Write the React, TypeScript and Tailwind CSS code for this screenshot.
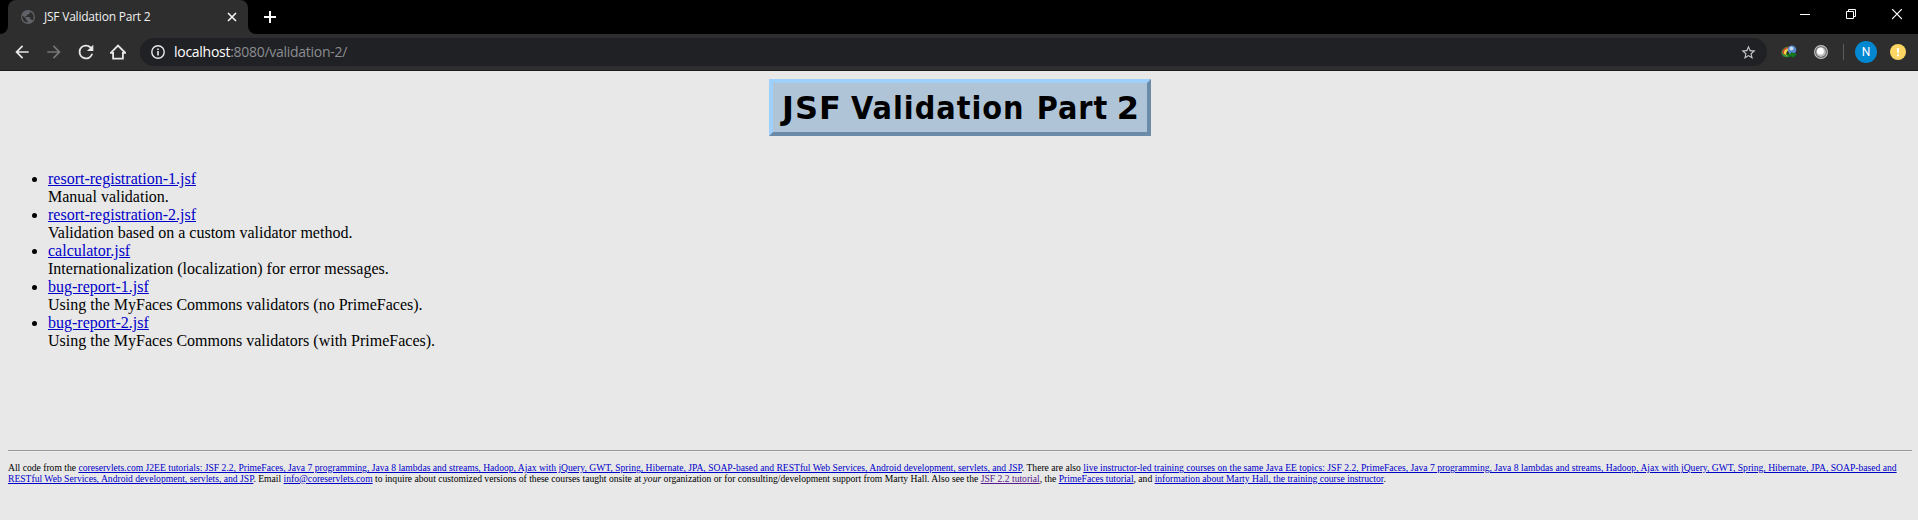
import React from "react";

const linkClass = "text-[#0000c8] underline";

const examples = [
  { name: "resort-registration-1.jsf", text: "Manual validation." },
  { name: "resort-registration-2.jsf", text: "Validation based on a custom validator method." },
  { name: "calculator.jsf", text: "Internationalization (localization) for error messages." },
  { name: "bug-report-1.jsf", text: "Using the MyFaces Commons validators (no PrimeFaces)." },
  { name: "bug-report-2.jsf", text: "Using the MyFaces Commons validators (with PrimeFaces)." },
];

function Link({ children, visited = false }: { children: React.ReactNode; visited?: boolean }) {
  return (
    <a href="#" className={visited ? "text-[#551a8b] underline" : linkClass}>
      {children}
    </a>
  );
}

function MaterialIcon({ d, className }: { d: string; className: string }) {
  return (
    <svg viewBox="0 0 24 24" fill="currentColor" className={className}>
      <path d={d} />
    </svg>
  );
}

function TabStrip() {
  return (
    <div className="flex h-[34px] bg-black">
      <div className="flex w-2 flex-col justify-end">
        <svg viewBox="0 0 8 8" className="size-2">
          <path d="M8 0V8H0A8 8 0 0 0 8 0Z" fill="#2e2e2e" />
        </svg>
      </div>
      <div className="flex h-full w-[240px] items-center rounded-t-lg bg-[#2e2e2e] pl-[13px] pr-[11px]">
        <svg viewBox="0 0 14 14" className="size-[14px] shrink-0">
          <circle cx="7" cy="7" r="7" fill="#5f6368" />
          <path d="M1.4 5.6L5 8.4V9.8L6.6 11V12.6A5.6 5.6 0 0 1 1.4 5.6Z" fill="#2e2e2e" />
          <path d="M8.8 1.7V3.4L7.6 4.6H6V6H4.4V7H8.6L9.4 8.2V9.6H10.6L11.6 10.4A5.7 5.7 0 0 0 8.8 1.7Z" fill="#2e2e2e" />
        </svg>
        <span className="ml-[9px] flex-1 whitespace-nowrap font-['Open_Sans',sans-serif] text-[12px] leading-[16px] tracking-[-0.22px] text-[#f1f1f1]">
          JSF Validation Part 2
        </span>
        <svg viewBox="0 0 10 10" className="size-[10px]" stroke="#f1f1f1" strokeWidth="1.7">
          <path d="M1 1L9 9M9 1L1 9" />
        </svg>
      </div>
      <div className="flex w-2 flex-col justify-end">
        <svg viewBox="0 0 8 8" className="size-2">
          <path d="M0 0V8H8A8 8 0 0 1 0 0Z" fill="#2e2e2e" />
        </svg>
      </div>
      <svg viewBox="0 0 12 12" className="ml-2 mt-[11px] size-3" stroke="#fff" strokeWidth="2">
        <path d="M6 0V12M0 6H12" />
      </svg>
      <div className="ml-auto mr-4 mt-[9px] flex h-[11px] gap-9">
        <svg viewBox="0 0 10 11" className="h-[11px] w-[10px]" shapeRendering="crispEdges">
          <path d="M0 5H10V6H0Z" fill="#fff" />
        </svg>
        <svg viewBox="0 0 10 11" className="h-[11px] w-[10px]" fill="none" stroke="#fff">
          <path d="M.5 2.5H7.5V9.5H.5ZM2.5 2.5V.5H9.5V7.5H7.5" />
        </svg>
        <svg viewBox="0 0 10 11" className="h-[11px] w-[10px]" stroke="#fff" strokeWidth="1.2">
          <path d="M0 0L10 10M10 0L0 10" />
        </svg>
      </div>
    </div>
  );
}

function Toolbar() {
  return (
    <div className="flex h-[37px] items-center border-b border-[#1c1c1c] bg-[#2e2e2e] pl-[12px] text-[#e8e8e8]">
      <MaterialIcon className="size-5" d="M20 11H7.83l5.59-5.59L12 4l-8 8 8 8 1.41-1.41L7.83 13H20v-2z" />
      <MaterialIcon className="ml-3 size-5 text-[#767676]" d="M12 4l-1.41 1.41L16.17 11H4v2h12.17l-5.58 5.59L12 20l8-8z" />
      <MaterialIcon
        className="ml-[11px] size-[22px]"
        d="M17.65 6.35A7.96 7.96 0 0 0 12 4a8 8 0 1 0 7.73 10h-2.08A6 6 0 1 1 12 6c1.66 0 3.14.69 4.22 1.78L13 11h7V4l-2.35 2.35z"
      />
      <svg viewBox="0 0 16 16" className="ml-[13px] size-4" fill="none" stroke="currentColor" strokeWidth="1.8">
        <path d="M.8 8.8L8 1.5L15.2 8.8H12.9V14.7H3.1V8.8Z" />
      </svg>
      <div className="ml-[14px] flex h-[28px] w-[1627px] items-center rounded-full bg-[#202124] pl-[11px] pr-[10px]">
        <svg viewBox="0 0 14 14" className="size-[14px]" fill="none" stroke="#e8eaed" strokeWidth="1.4">
          <circle cx="7" cy="7" r="6.2" />
          <path d="M7 6V10.4M7 3.5V5" strokeWidth="1.6" />
        </svg>
        <span className="ml-[9px] flex-1 font-['Open_Sans',sans-serif] text-[14px] leading-[20px] tracking-[-0.28px] text-[#8a8d91]">
          <span className="text-white">localhost</span>:8080/validation-2/
        </span>
        <MaterialIcon
          className="size-[17px] text-[#c4c7cb]"
          d="M22 9.24l-7.19-.62L12 2 9.19 8.63 2 9.24l5.46 4.73L5.82 21 12 17.27 18.18 21l-1.63-7.03L22 9.24zM12 15.4l-3.76 2.27 1-4.28-3.32-2.88 4.38-.38L12 6.1l1.71 4.04 4.38.38-3.32 2.88 1 4.28L12 15.4z"
        />
      </div>
      <svg viewBox="0 0 16 14" className="ml-[14px] h-[14px] w-4">
        <path d="M8 1.5C3 1.5 .2 5 .3 8C1 11.5 4 13 8 12L9 5Z" fill="#2f8f3a" />
        <path d="M8 2C4 2 1 5 1 7.5L3.5 10L8 8Z" fill="#c8402c" />
        <path d="M8.5 3.2C5 3.2 2.6 5.5 2.8 8.5L6 11L9 8Z" fill="#f2d648" />
        <path d="M8 5.5C6.5 5.5 5 7 5.4 9L8 10Z" fill="#24351b" />
        <circle cx="11" cy="4.7" r="4.3" fill="#5586cf" />
        <circle cx="10.4" cy="3.4" r="2" fill="#c9dcf4" />
        <path d="M4.5 9H10V7L16 9.2L11.5 13.2V11.4C8 12 6 11 4.5 9Z" fill="#127a1c" />
      </svg>
      <svg viewBox="0 0 14 14" className="ml-[17px] size-[14px]">
        <circle cx="7" cy="7" r="6.4" fill="#555" stroke="#c5c5c5" strokeWidth="1.1" />
        <circle cx="7" cy="7" r="4.9" fill="#bdbdbd" />
        <circle cx="6.4" cy="6.2" r="3.4" fill="#fff" />
      </svg>
      <div className="ml-[15px] h-4 w-px bg-[#5c5c5c]" />
      <div className="ml-[11px] flex size-[22px] items-center justify-center rounded-full bg-[#0288d1] font-[Roboto,sans-serif] text-[12px] leading-none text-white">
        N
      </div>
      <svg viewBox="0 0 16 16" className="ml-[13px] size-4">
        <circle cx="8" cy="8" r="8" fill="#fdd663" />
        <path d="M7 4H9V9H7ZM7 10.3H9V12.2H7Z" fill="#fff" />
      </svg>
    </div>
  );
}

export default function App() {
  return (
    <div className="flex h-[520px] flex-col overflow-hidden bg-[#e8e8e8] font-['Liberation_Serif',serif] text-black">
      <TabStrip />
      <Toolbar />
      <main className="flex flex-col pl-2 pr-[6px] pt-2">
        <h1 className="h-[57px] w-[382px] self-center whitespace-nowrap border-4 border-b-[#6b8ba9] border-l-[#9fcffb] border-r-[#6b8ba9] border-t-[#9fcffb] bg-[#b0c4d8] pl-[9px] pt-[6px] font-['DejaVu_Sans',sans-serif] text-[32px] font-bold leading-[39px]">
          <span className="tracking-[1px]">JSF</span>{" "}
          <span className="-ml-0.5 font-['DejaVu_Sans_Condensed','DejaVu_Sans',sans-serif] tracking-[1px]">Validation</span>{" "}
          <span className="ml-px font-['DejaVu_Sans_Condensed','DejaVu_Sans',sans-serif] tracking-[0.95px]">Part</span>{" "}
          <span className="-ml-[2.5px]">2</span>
        </h1>
        <ul className="mt-[34px] list-disc pl-10 text-[16px] leading-[18px]">
          {examples.map((item) => (
            <li key={item.name}>
              <Link>{item.name}</Link>
              <br />
              {item.text}
            </li>
          ))}
        </ul>
        <hr className="mt-[100px] h-[2px] border-0 border-t border-b border-b-[#eeeeee] border-t-[#999]" />
        <p className="mt-[10px] text-[9.6px] leading-[11px] [word-spacing:0.022px]">
          All code from the{" "}
          <Link>
            coreservlets.com J2EE tutorials: JSF 2.2, PrimeFaces, Java 7 programming, Java 8 lambdas and streams, Hadoop, Ajax with
            jQuery, GWT, Spring, Hibernate, JPA, SOAP-based and RESTful Web Services, Android development, servlets, and JSP
          </Link>
          . There are also{" "}
          <Link>
            live instructor-led training courses on the same Java EE topics: JSF 2.2, PrimeFaces, Java 7 programming, Java 8 lambdas and
            streams, Hadoop, Ajax with jQuery, GWT, Spring, Hibernate, JPA, SOAP-based and RESTful Web Services, Android development,
            servlets, and JSP
          </Link>
          . Email <Link>info@coreservlets.com</Link> to inquire about customized versions of these courses taught onsite at{" "}
          <i>your</i> organization or for consulting/development support from Marty Hall. Also see the{" "}
          <Link visited>JSF 2.2 tutorial</Link>, the <Link>PrimeFaces tutorial</Link>, and{" "}
          <Link>information about Marty Hall, the training course instructor</Link>.
        </p>
      </main>
    </div>
  );
}
